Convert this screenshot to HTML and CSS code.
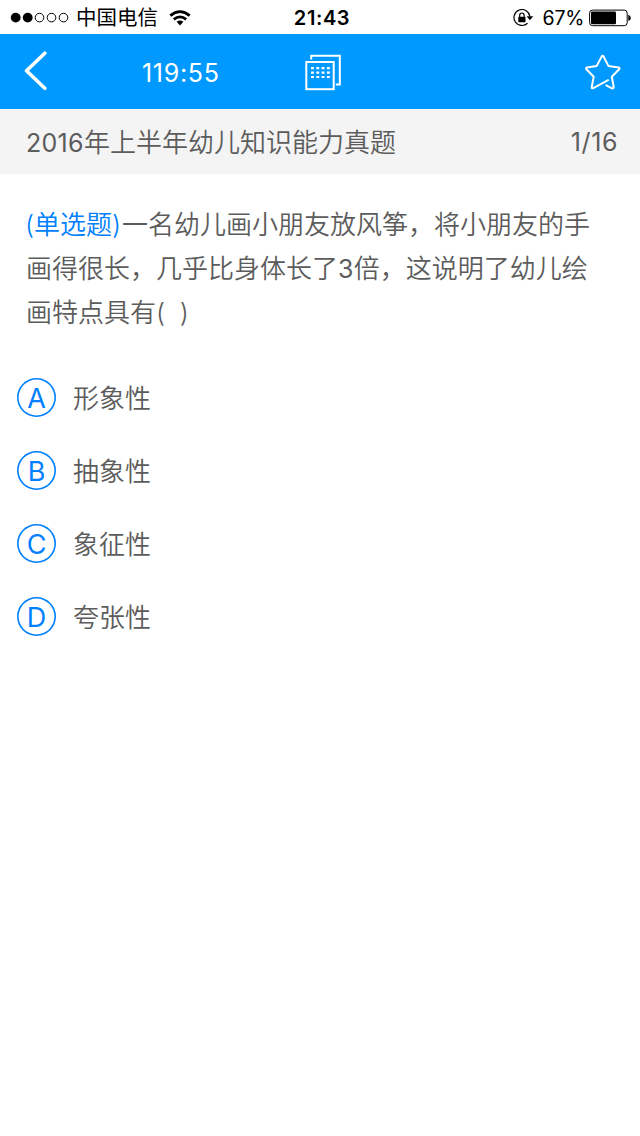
FILE: index.html
```html
<!DOCTYPE html>
<html lang="zh-CN">
<head>
    <meta charset="UTF-8">
    <title>2016年上半年幼儿知识能力真题</title>
    <link rel="stylesheet" href="styles.css">
</head>
<body>
    <div class="status-bar">
        <div class="status-left">
            <svg class="signal" width="60" height="12" viewBox="0 0 60 12">
                <circle cx="5.7" cy="5.6" r="4.9" fill="#000"/>
                <circle cx="17.7" cy="5.6" r="4.9" fill="#000"/>
                <g fill="none" stroke="#000" stroke-width="1">
                    <circle cx="29.5" cy="5.6" r="4.3"/>
                    <circle cx="41.5" cy="5.6" r="4.3"/>
                    <circle cx="53.5" cy="5.6" r="4.3"/>
                </g>
            </svg>
            <span class="carrier">中国电信</span>
            <svg class="wifi" width="22" height="17" viewBox="0 0 22 17">
                <g fill="none" stroke="#000" stroke-width="2.7">
                    <path d="M1.3 5.6Q11 -2.4 20.7 5.6"/>
                    <path d="M4.8 9.4Q11 4.2 17.2 9.4"/>
                </g>
                <path d="M7.6 11.8Q11 9 14.4 11.8L11 15.4Z" fill="#000"/>
            </svg>
        </div>
        <span class="clock">21:43</span>
        <div class="status-right">
            <svg class="lock" width="21" height="18" viewBox="0 0 21 18">
                <path d="M14.6 14.2A8 8 0 1 1 16.9 7.4" fill="none" stroke="#000" stroke-width="1.2"/>
                <path d="M13.6 7.3H20.2L16.9 11.3Z" fill="#000"/>
                <rect x="5.3" y="7.8" width="7.2" height="5.4" rx=".6" fill="#000"/>
                <path d="M6.7 8V6.2a2.2 2.2 0 0 1 4.4 0V8" fill="none" stroke="#000" stroke-width="1.2"/>
            </svg>
            <span class="percent">67%</span>
            <svg class="battery" width="42" height="18" viewBox="0 0 42 18">
                <rect x=".6" y="1.1" width="37.6" height="15.6" rx="3" fill="none" stroke="#000" stroke-width="1"/>
                <rect x="2" y="2.5" width="25" height="12.8" rx="1.3" fill="#000"/>
                <path d="M39.3 5.7Q41.8 6.6 41.8 8.9T39.3 12.1Z" fill="#000"/>
            </svg>
        </div>
    </div>

    <div class="nav-bar">
        <svg class="back" width="26" height="42" viewBox="0 0 26 42">
            <path d="M21.8 2.2L3.5 19.7L21.8 37.2" fill="none" stroke="#fff" stroke-width="3.6" stroke-linecap="round" stroke-linejoin="round"/>
        </svg>
        <span class="timer">119:55</span>
        <svg class="sheet" width="38" height="38" viewBox="0 0 38 38">
            <g fill="none" stroke="#fff" stroke-width="2">
                <rect x="2.3" y="9" width="27.4" height="27.2"/>
                <path d="M7.2 6.5V2.8H35.8V31.6H31.8"/>
            </g>
            <path d="M7 15.2H26M7 19.6H26M7 24H26" fill="none" stroke="#fff" stroke-width="2.2" stroke-dasharray="2.9 2.4"/>
        </svg>
        <svg class="star" width="38" height="38" viewBox="0 0 38 38">
            <path d="M24.1 27.2L8.8 35.3Q7.7 35.6 7.7 34.4L9.7 23.7L2.4 16.2Q1.5 15 3 14.4L12.8 12.9L17.6 3.6Q18.6 1.9 19.6 3.6L24.4 12.9L34.6 14.4Q36.1 15 35.2 16.2L27.8 23.7L29.7 34Q29.5 35.9 28 35.3L22.3 32.4" fill="none" stroke="#fff" stroke-width="2" stroke-linejoin="round" stroke-linecap="round"/>
        </svg>
    </div>

    <div class="title-bar">
        <span><span class="num">2016</span>年上半年幼儿知识能力真题</span>
        <span class="page">1/16</span>
    </div>

    <div class="question">
        <span class="type">(单选题)</span>一名幼儿画小朋友放风筝，将小朋友的手<br>画得很长，几乎比身体长了<span class="num">3</span>倍，这说明了幼儿绘<br>画特点具有<span class="blank">( &nbsp;)</span>
    </div>

    <div class="options">
        <div class="option"><span class="letter">A</span><span class="text">形象性</span></div>
        <div class="option"><span class="letter">B</span><span class="text">抽象性</span></div>
        <div class="option"><span class="letter">C</span><span class="text">象征性</span></div>
        <div class="option"><span class="letter">D</span><span class="text">夸张性</span></div>
    </div>
</body>
</html>
```

FILE: styles.css
```css
body {
    font-family: Inter, "Noto Sans CJK SC", sans-serif;
    font-weight: 350;
    font-size: 26px;
    background-color: #fff;
    margin: 0;
    color: #5c5c5c;
}

svg {
    display: block;
    flex: none;
}

/* phone status bar */
.status-bar {
    display: grid;
    grid-template-columns: 1fr auto 1fr;
    align-items: center;
    height: 34px;
    padding: 0 9px 0 10px;
    color: #000;
    font-size: 20px;
    line-height: 36px;
}

.status-left,
.status-right {
    display: flex;
    align-items: center;
}

.status-right {
    justify-content: flex-end;
}

.carrier {
    margin-left: 6px;
    font-size: 20.5px;
    font-weight: 400;
}

.wifi {
    margin-left: 11px;
}

.clock {
    margin-left: 3px;
    font-weight: 600;
    letter-spacing: 0.6px;
}

.percent {
    margin: 0 5px 0 9px;
    font-size: 19.5px;
    font-weight: 400;
    letter-spacing: -0.3px;
}

/* blue header */
.nav-bar {
    display: flex;
    align-items: center;
    height: 75px;
    padding: 0 18px 0 23px;
    background-color: #0099ff;
    color: #fff;
}

.timer {
    width: 80px;
    margin-left: 93px;
    padding-top: 2px;
    font-size: 25px;
    font-weight: 400;
    letter-spacing: 0.7px;
    line-height: 70px;
}

.sheet {
    margin-left: 82px;
}

.star {
    margin-left: auto;
}

.title-bar {
    display: flex;
    justify-content: space-between;
    height: 65px;
    padding: 0 22px 0 26px;
    background-color: #f4f4f4;
    line-height: 67px;
}

.num,
.page {
    font-size: 25px;
    font-weight: 400;
    letter-spacing: 0.3px;
}

.page {
    letter-spacing: 0.6px;
}

.question {
    padding: 29px 26px 0;
    line-height: 44px;
    white-space: nowrap;
}

.type {
    margin-left: -1px;
    margin-right: 1px;
    color: #0080ff;
}

.options {
    display: flex;
    flex-direction: column;
    gap: 34px;
    padding: 43px 17px 0;
}

.option {
    display: flex;
    align-items: center;
    gap: 17px;
    height: 39px;
}

.option .text {
    padding-top: 2px;
    line-height: 39px;
}

.letter {
    width: 39px;
    height: 39px;
    border-radius: 50%;
    box-shadow: inset 0 0 0 1.6px #0080ff;
    color: #0080ff;
    font-size: 27px;
    font-weight: 400;
    line-height: 41px;
    text-align: center;
}
```
